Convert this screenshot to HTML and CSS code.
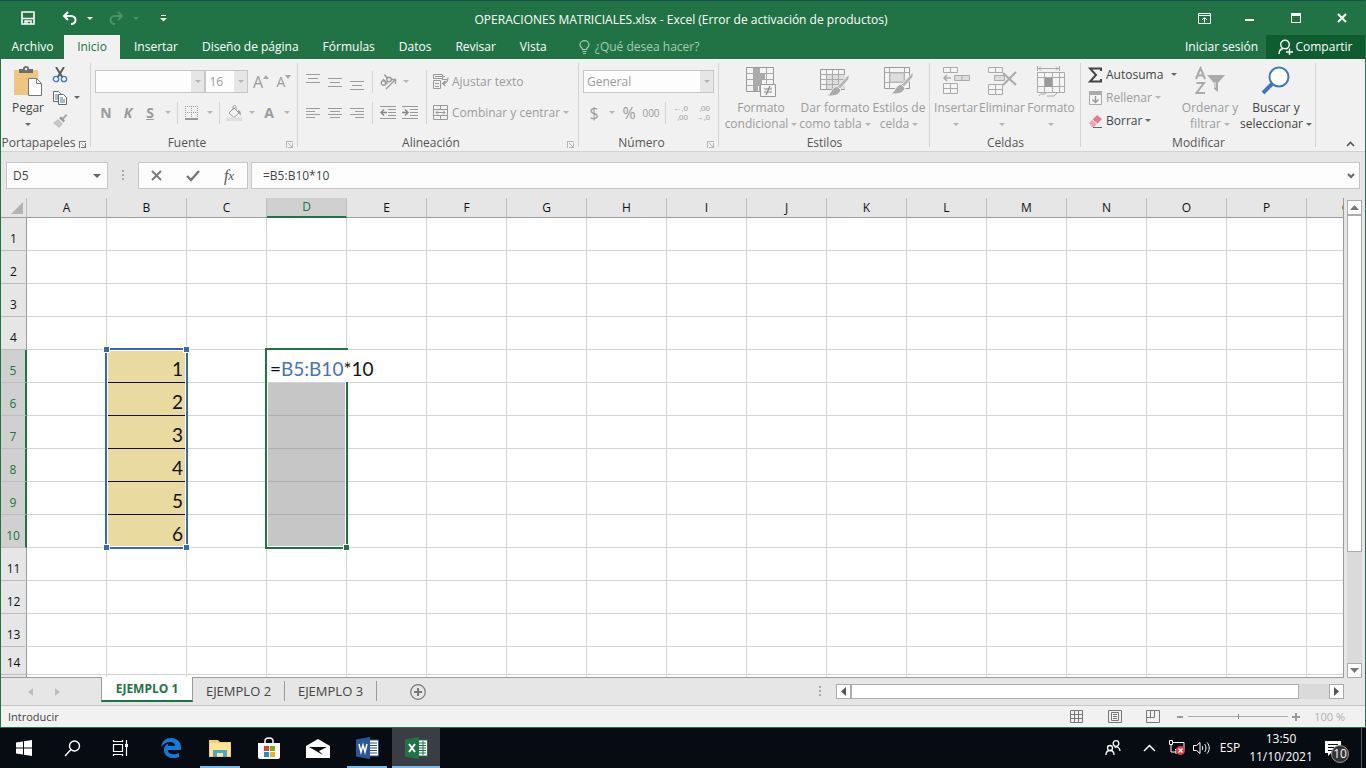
FILE: index.html
```html
<!DOCTYPE html>
<html lang="es">
<head>
    <meta charset="UTF-8">
    <meta name="viewport" content="width=device-width, initial-scale=1.0">
    <title>OPERACIONES MATRICIALES.xlsx - Excel</title>
    <link rel="stylesheet" href="styles.css">
</head>
<body>

<div class="window">
    <header class="titlebar">
        <div class="quick">
            <button class="q-save" aria-label="Guardar"><svg width="14" height="14" viewBox="0 0 14 14"><path d="M1 1h12v12H1z M1 7.5h12" fill="none" stroke="#fff" stroke-width="1.6"/><path d="M4 13v-3h6v3M6 10v3" fill="none" stroke="#fff" stroke-width="1.4"/></svg></button>
            <button class="q-undo" aria-label="Deshacer"><svg width="16" height="14" viewBox="0 0 16 14"><path d="M6 1L2 5l4 4M2 5h7c6 0 6 8 0 8" fill="none" stroke="#fff" stroke-width="2"/></svg></button>
            <button class="q-caret" aria-label="Historial"><i class="caret white"></i></button>
            <button class="q-redo" aria-label="Rehacer"><svg width="16" height="14" viewBox="0 0 16 14"><path d="M10 1l4 4-4 4M14 5H7c-6 0-6 8 0 8" fill="none" stroke="#4e9169" stroke-width="2"/></svg></button>
            <button class="q-caret" aria-label="Repetir"><i class="caret faded"></i></button>
            <button class="q-custom" aria-label="Personalizar"><svg width="7" height="7" viewBox="0 0 7 7"><path d="M1 .5h5" stroke="#fff"/><path d="M0 3h7L3.500 6.500z" fill="#fff"/></svg></button>
        </div>
        <h1>OPERACIONES MATRICIALES.xlsx - Excel (Error de activación de productos)</h1>
        <div class="controls">
            <button aria-label="Opciones de la cinta"><svg width="13" height="11" viewBox="0 0 13 11"><path d="M.5.5h12v10H.5zM.5 2.500h12M6.500 9.500V5M4 7l2.500-2.500L9 7" fill="none" stroke="#fff"/></svg></button>
            <button aria-label="Minimizar"><svg width="10" height="10" viewBox="0 0 10 10"><path d="M0 7h9" stroke="#fff" stroke-width="2"/></svg></button>
            <button aria-label="Maximizar"><svg width="10" height="10" viewBox="0 0 10 10"><path d="M.5.5h9v9h-9z" fill="none" stroke="#fff"/><path d="M0 1.500h10" stroke="#fff" stroke-width="3"/></svg></button>
            <button aria-label="Cerrar"><svg width="10" height="10" viewBox="0 0 10 10"><path d="M1 1l8 8M9 1L1 9" stroke="#fff" stroke-width="2"/></svg></button>
        </div>
    </header>

    <nav class="tabs">
        <button class="file">Archivo</button>
        <button class="active">Inicio</button>
        <button>Insertar</button>
        <button>Diseño de página</button>
        <button>Fórmulas</button>
        <button>Datos</button>
        <button>Revisar</button>
        <button>Vista</button>
        <button class="tell"><svg width="11" height="14" viewBox="0 0 11 14"><path d="M3.500 9.500C3.500 7.500 1 7.500 1 4.800a4.500 4.200 0 0 1 9 0c0 2.700-2.500 2.700-2.500 4.700zM3.500 11.500h4M4 13.500h3" fill="none" stroke="#a5cdb4" stroke-width="1.200"/></svg>¿Qué desea hacer?</button>
        <button class="signin">Iniciar sesión</button>
        <button class="share"><svg width="15" height="16" viewBox="0 0 15 16"><circle cx="7" cy="5.500" r="4.300" fill="none" stroke="#fff" stroke-width="1.400"/><path d="M1 15c0-3 2-5 4-5.500M8.500 9.500l1 .5M8 13h7M11.500 9.500v6.500" fill="none" stroke="#fff" stroke-width="1.400"/></svg>Compartir</button>
    </nav>

    <section class="ribbon">
        <div class="group g-clip">
            <div class="body">
                <button class="big paste">
                    <svg width="30" height="32" viewBox="0 0 30 32"><path d="M1 4h24v25H1z" fill="#edc67f"/><path d="M6 7V3h4a3 3 0 0 1 6 0h4v4z" fill="#6d6d6d"/><circle cx="13" cy="3" r="1.200" fill="#f1f1f1"/><path d="M15.500 12.500h8l5 5v12h-13z" fill="#fff" stroke="#777"/><path d="M23.500 12.500v5h5" fill="none" stroke="#777"/></svg>
                    <span>Pegar</span><i class="caret"></i>
                </button>
                <div class="stack">
                    <button aria-label="Cortar"><svg width="16" height="16" viewBox="0 0 16 16"><path d="M4 0l6.500 10.500M12 0L5.500 10.500" stroke="#5b5b5b" stroke-width="2"/><circle cx="4" cy="12" r="2.700" fill="none" stroke="#3f78b5" stroke-width="1.300"/><circle cx="12" cy="12" r="2.700" fill="none" stroke="#3f78b5" stroke-width="1.300"/></svg></button>
                    <button aria-label="Copiar"><svg width="16" height="16" viewBox="0 0 16 16"><path d="M1.500 1.500h5l2 2v8h-7z" fill="#fff" stroke="#666"/><path d="M6.500 4.500h5l3 3v7h-8z" fill="#fff" stroke="#666"/><path d="M3 5h3M3 7h3M3 9h3M8 8h3M8 10h5M8 12h5" stroke="#3f78b5"/></svg><i class="caret"></i></button>
                    <button aria-label="Copiar formato"><svg width="16" height="16" viewBox="0 0 16 16"><path d="M10 5l4-4 1.500 1.500-4 4z" fill="#aaa"/><path d="M7 5l2-1.500 4 4-1.500 2z" fill="#999"/><path d="M6 6l5 5-4 4-6-5z" fill="#c6c6c6"/></svg></button>
                </div>
            </div>
            <div class="caption">Portapapeles<i class="launch dark"></i></div>
        </div>

        <div class="group g-font">
            <div class="rows">
                <div class="row">
                    <span class="combo w-font"><select aria-label="Fuente" disabled><option></option></select></span>
                    <span class="combo w-size"><select aria-label="Tamaño" disabled><option>16</option></select></span>
                    <button class="glyph grow" disabled>A<svg width="6" height="4"><path d="M0 4l3-4 3 4z" fill="#a6a6a6"/></svg></button>
                    <button class="glyph shrink" disabled>A<svg width="6" height="4"><path d="M0 0h6L3 4z" fill="#a6a6a6"/></svg></button>
                </div>
                <div class="row">
                    <button class="glyph w22" disabled><b>N</b></button>
                    <button class="glyph w22" disabled><b><em>K</em></b></button>
                    <button class="glyph w22" disabled><b><u>S</u></b></button>
                    <button class="drop" disabled aria-label="Subrayado"><i class="caret dim"></i></button>
                    <span class="sep"></span>
                    <button class="w22" disabled aria-label="Bordes"><svg width="14" height="14" viewBox="0 0 14 14"><path d="M.5 0v13M6.500 0v13M12.500 0v13M0 .5h13M0 6.500h13" stroke="#999" stroke-dasharray="1 1"/><path d="M0 13h13" stroke="#999" stroke-width="2"/></svg></button>
                    <button class="drop" disabled aria-label="Más bordes"><i class="caret dim"></i></button>
                    <span class="sep"></span>
                    <button class="w22" disabled aria-label="Relleno"><svg width="16" height="16" viewBox="0 0 16 16"><path d="M3 8l5-5 5 5-5 4.500z" fill="#f4f4f4" stroke="#999"/><path d="M7 5V2c0-2 3-2 3 0v3" fill="none" stroke="#999"/><path d="M12 5c3 1 3 3 2.500 6-1-2-1-3-2.500-3z" fill="#999"/><path d="M0 12.500h16v3.500H0z" fill="#e0dede"/></svg></button>
                    <button class="drop" disabled aria-label="Color de relleno"><i class="caret dim"></i></button>
                    <button class="glyph w22" disabled><b>A</b></button>
                    <button class="drop" disabled aria-label="Color de fuente"><i class="caret dim"></i></button>
                </div>
            </div>
            <div class="caption">Fuente<i class="launch"></i></div>
        </div>

        <div class="group g-align">
            <div class="halves">
                <div class="rows">
                    <div class="row">
                        <button class="w22" disabled aria-label="Alinear arriba"><svg width="14" height="16"><path d="M0 .5h14M2 4.500h10M0 8.500h14" stroke="#9c9c9c"/></svg></button>
                        <button class="w22" disabled aria-label="Alinear en el medio"><svg width="14" height="16"><path d="M0 4.500h14M2 8.500h10M0 12.500h14" stroke="#9c9c9c"/></svg></button>
                        <button class="w22" disabled aria-label="Alinear abajo"><svg width="14" height="16"><path d="M0 7.500h14M2 11.500h10M0 15.500h14" stroke="#9c9c9c"/></svg></button>
                        <span class="sep"></span>
                        <button class="w22" disabled aria-label="Orientación"><svg width="17" height="16" viewBox="0 0 17 16"><g fill="none" stroke="#999" stroke-width="1.400"><circle cx="3.500" cy="9" r="2.200"/><path d="M3 5l4.500 5"/><circle cx="9" cy="5.500" r="2.200"/><path d="M4.500.500l3 4"/></g><path d="M6 15l9-9M11 5.500h4.500V10" fill="none" stroke="#999" stroke-width="1.300"/></svg></button>
                        <button class="drop" disabled aria-label="Más orientación"><i class="caret dim"></i></button>
                    </div>
                    <div class="row">
                        <button class="w22" disabled aria-label="Izquierda"><svg width="14" height="12"><path d="M0 1.500h14M0 4.500h9M0 7.500h14M0 10.500h9" stroke="#9c9c9c"/></svg></button>
                        <button class="w22" disabled aria-label="Centrar"><svg width="14" height="12"><path d="M0 1.500h14M2 4.500h10M0 7.500h14M2 10.500h10" stroke="#9c9c9c"/></svg></button>
                        <button class="w22" disabled aria-label="Derecha"><svg width="14" height="12"><path d="M0 1.500h14M5 4.500h9M0 7.500h14M5 10.500h9" stroke="#9c9c9c"/></svg></button>
                        <span class="sep"></span>
                        <button class="w22" disabled aria-label="Disminuir sangría"><svg width="16" height="14"><path d="M0 .5h16M8 3.500h8M8 6.500h8M8 9.500h8M0 12.500h16" stroke="#999"/><path d="M1 6.500h6M4 3.500l-3 3 3 3" fill="none" stroke="#888" stroke-width="1.500"/></svg></button>
                        <button class="w22" disabled aria-label="Aumentar sangría"><svg width="16" height="14"><path d="M0 .5h16M8 3.500h8M8 6.500h8M8 9.500h8M0 12.500h16" stroke="#999"/><path d="M0 6.500h6M3 3.500l3 3-3 3" fill="none" stroke="#888" stroke-width="1.500"/></svg></button>
                    </div>
                </div>
                <div class="rows wide">
                    <div class="row">
                        <button class="text" disabled><svg width="16" height="15"><path d="M.5.5h9v4h-9zM.5 6.500h7v8h-7zM2 2.500h10M2 9.500h4M2 12.500h4M9 5.500h5" fill="none" stroke="#999"/><path d="M15 3.500c0 4-1 6-5 6M12.500 7l-3 2.500 3 2.500" fill="none" stroke="#999" stroke-width="1.200"/></svg>Ajustar texto</button>
                    </div>
                    <div class="row">
                        <button class="text" disabled><svg width="16" height="15"><path d="M.5.5h14v14H.5zM.5 4.500h14M.5 10.500h14M7.500.5v4M7.500 10.500v4" fill="none" stroke="#999"/><path d="M3 7.500h9M5 5.500l-2 2 2 2M10 5.500l2 2-2 2" fill="none" stroke="#999"/></svg>Combinar y centrar</button>
                        <button class="drop" disabled aria-label="Más opciones"><i class="caret dim"></i></button>
                    </div>
                </div>
            </div>
            <div class="caption">Alineación<i class="launch"></i></div>
        </div>

        <div class="group g-number">
            <div class="rows">
                <div class="row">
                    <span class="combo w-num"><select aria-label="Formato de número" disabled><option>General</option></select></span>
                </div>
                <div class="row">
                    <button class="w22 money" disabled>$</button>
                    <button class="drop" disabled aria-label="Moneda"><i class="caret dim"></i></button>
                    <button class="w22 money" disabled>%</button>
                    <button class="w22 tiny" disabled>000</button>
                    <span class="sep"></span>
                    <button class="w22 dec" disabled><span>←,0</span><span>,00</span></button>
                    <button class="w22 dec" disabled><span>,00</span><span>→,0</span></button>
                </div>
            </div>
            <div class="caption">Número<i class="launch"></i></div>
        </div>

        <div class="group g-styles">
            <div class="body">
                <button class="big" disabled>
                    <svg width="30" height="32" viewBox="0 0 30 32"><path d="M.5 1.500h27v24H.5z" fill="#f4f4f4" stroke="#999"/><path d="M.5 7.500h27M.5 13.500h27M.5 19.500h27M7.500 1.500v24M13.500 1.500v24M20.500 1.500v24" stroke="#aaa" fill="none"/><path d="M8 2h5v6H8zM8 8h11v5H8zM8 14h8v5H8zM8 20h4v5H8z" fill="#aaa"/><path d="M14.500 18.500h15v12h-15z" fill="#f4f4f4" stroke="#999"/><path d="M18 23h8M18 26h8M24 20l-4 9" stroke="#888" stroke-width="1.200"/></svg>
                    <span>Formato<br>condicional<i class="caret dim"></i></span>
                </button>
                <button class="big" disabled>
                    <svg width="30" height="32" viewBox="0 0 30 32"><path d="M.5 3.500h24v20H.5z" fill="#f4f4f4" stroke="#999"/><path d="M7 9h18v14H7z" fill="#ddd"/><path d="M.5 8.500h24M.5 13.500h24M.5 18.500h24M6.500 3.500v20M12.500 3.500v20M18.500 3.500v20" stroke="#aaa"/><path d="M29 8v5L20 23l-3-2z" fill="#b4b4b4" stroke="#f1f1f1"/><path d="M17 20l4 4c-2 6-7 6-14 6 4-2 4-8 10-10z" fill="#aaa" stroke="#f1f1f1"/></svg>
                    <span>Dar formato<br>como tabla<i class="caret dim"></i></span>
                </button>
                <button class="big" disabled>
                    <svg width="30" height="32" viewBox="0 0 30 32"><path d="M.5 1.500h25v21H.5z" fill="#f4f4f4" stroke="#999"/><path d="M.5 6.500h25M.5 16.500h25M5.500 1.500v21M20.500 1.500v21" stroke="#aaa"/><path d="M6 7h14v9H6z" fill="#ddd" stroke="#bbb"/><path d="M29 6v5L20 21l-3-2z" fill="#b4b4b4" stroke="#f1f1f1"/><path d="M17 18l4 4c-2 6-7 6-14 6 4-2 4-8 10-10z" fill="#aaa" stroke="#f1f1f1"/></svg>
                    <span>Estilos de<br>celda<i class="caret dim"></i></span>
                </button>
            </div>
            <div class="caption">Estilos</div>
        </div>

        <div class="group g-cells">
            <div class="body">
                <button class="big" disabled>
                    <svg width="28" height="32" viewBox="0 0 28 32"><path d="M1.500 1.500h14v5h-14zM8.500 1.500v5M1.500 17.500h14v10h-14zM8.500 17.500v10M1.500 22.500h14" fill="#f4f4f4" stroke="#aaa"/><path d="M12.500 9.500h15v5h-15zM20 9.500v5" fill="#ddd" stroke="#aaa"/><path d="M2 12h7M5 9l-3 3 3 3" fill="none" stroke="#aaa" stroke-width="1.500"/></svg>
                    <span>Insertar</span><i class="caret dim"></i>
                </button>
                <button class="big" disabled>
                    <svg width="30" height="32" viewBox="0 0 30 32"><path d="M1.500 1.500h14v5h-14zM8.500 1.500v5M1.500 18.500h14v10h-14zM8.500 18.500v10M1.500 23.500h14" fill="#f4f4f4" stroke="#aaa"/><path d="M7.500 9.500h10v5h-10z" fill="#ddd" stroke="#aaa"/><path d="M16 7l13 12M29 6L16 19" stroke="#aaa" stroke-width="2"/></svg>
                    <span>Eliminar</span><i class="caret dim"></i>
                </button>
                <button class="big" disabled>
                    <svg width="28" height="32" viewBox="0 0 28 32"><path d="M.5 0v5M22.500 0v5M1 2.500h21M4 .5l-2 2 2 2M19 .5l2 2-2 2" fill="none" stroke="#aaa"/><path d="M.5 6.500h27v20H.5z" fill="#f4f4f4" stroke="#aaa"/><path d="M.5 11.500h27M.5 20.500h27M7.500 6.500v20M15.500 6.500v20M22.500 6.500v20M2 30c2-4 4 0 7-3M10 30h7l3-3" stroke="#aaa" fill="none"/><path d="M8 12h7v9H8z" fill="#999"/></svg>
                    <span>Formato</span><i class="caret dim"></i>
                </button>
            </div>
            <div class="caption">Celdas</div>
        </div>

        <div class="group g-edit">
            <div class="body">
                <div class="stack">
                    <button class="text"><svg width="15" height="16"><path d="M13 4V1.500H2L8 8l-6 6.500h11V12" fill="none" stroke="#444" stroke-width="2"/></svg>Autosuma<i class="caret"></i></button>
                    <button class="text near" disabled><svg width="15" height="16"><path d="M1.500 1.500h12v13h-12z" fill="#f4f4f4" stroke="#aaa"/><path d="M1 3h13" stroke="#aaa" stroke-width="4"/><path d="M7.500 6v6M4.500 9.500l3 3 3-3" fill="none" stroke="#999" stroke-width="1.400"/></svg>Rellenar<i class="caret dim"></i></button>
                    <button class="text near"><svg width="15" height="16"><path d="M1 10l3-3 5 4-3 3H4z" fill="#f0a3b2"/><path d="M4.500 6.500L9 2l5 4-4.500 4.500z" fill="#db7f93"/><path d="M5 14.500h9" stroke="#666"/></svg>Borrar<i class="caret"></i></button>
                </div>
                <button class="big" disabled>
                    <svg width="30" height="32" viewBox="0 0 30 32"><path d="M1 13L5.500 2 10 13M3 9.500h5M1.500 17H9L1.500 27H10" fill="none" stroke="#aaa" stroke-width="2"/><path d="M12 9h18l-7 8v9l-4-3v-6z" fill="#aaa"/><path d="M20 16v6" stroke="#f1f1f1"/></svg>
                    <span>Ordenar y<br>filtrar<i class="caret dim"></i></span>
                </button>
                <button class="big">
                    <svg width="30" height="32" viewBox="0 0 30 32"><circle cx="18" cy="11" r="9.500" fill="#fff" stroke="#3f78b5" stroke-width="2"/><path d="M11 18L2 27" stroke="#3f78b5" stroke-width="4"/></svg>
                    <span>Buscar y<br>seleccionar<i class="caret"></i></span>
                </button>
            </div>
            <div class="caption">Modificar</div>
        </div>
        <button class="collapse" aria-label="Contraer la cinta"><svg width="9" height="6"><path d="M1 5l3.500-3.500L8 5" fill="none" stroke="#555" stroke-width="1.600"/></svg></button>
    </section>

    <section class="formula">
        <div class="namebox"><input type="text" value="D5" aria-label="Cuadro de nombres"><i class="caret"></i></div>
        <span class="grip"></span>
        <div class="checks">
            <button aria-label="Cancelar"><svg width="12" height="12"><path d="M1 1l9 9M10 1l-9 9" stroke="#777" stroke-width="1.800"/></svg></button>
            <button aria-label="Introducir"><svg width="14" height="12"><path d="M1 6l4 4 8-9" fill="none" stroke="#777" stroke-width="2.400"/></svg></button>
            <button aria-label="Insertar función" class="fx">f<sub>x</sub></button>
        </div>
        <div class="entry"><input type="text" value="=B5:B10*10" aria-label="Barra de fórmulas"><svg width="8" height="6"><path d="M1 1l3 3 3-3" fill="none" stroke="#666" stroke-width="2"/></svg></div>
    </section>

    <main class="sheet">
        <div class="grid">
            <table>
                <thead>
                    <tr><th class="corner"><svg width="12" height="12"><path d="M12 0v12H0z" fill="#b3b3b3"/></svg></th><th>A</th><th>B</th><th>C</th><th class="on">D</th><th>E</th><th>F</th><th>G</th><th>H</th><th>I</th><th>J</th><th>K</th><th>L</th><th>M</th><th>N</th><th>O</th><th>P</th><th>Q</th></tr>
                </thead>
                <tbody id="rows"></tbody>
            </table>
        </div>
        <div class="vscroll">
            <button aria-label="Subir"><svg width="9" height="5"><path d="M0 5l4.500-5L9 5z" fill="#777"/></svg></button>
            <div class="thumb"></div>
            <div class="track"></div>
            <button aria-label="Bajar"><svg width="9" height="5"><path d="M0 0h9L4.500 5z" fill="#777"/></svg></button>
        </div>
    </main>

    <section class="sheetbar">
        <div class="arrows">
            <button aria-label="Hoja anterior"><svg width="5" height="8"><path d="M5 0v8L0 4z" fill="#bdbdbd"/></svg></button>
            <button aria-label="Hoja siguiente"><svg width="5" height="8"><path d="M0 0v8l5-4z" fill="#bdbdbd"/></svg></button>
        </div>
        <button class="stab active">EJEMPLO 1</button>
        <button class="stab">EJEMPLO 2</button>
        <button class="stab">EJEMPLO 3</button>
        <button class="add" aria-label="Hoja nueva"><svg width="16" height="16"><circle cx="8" cy="8" r="7.300" fill="none" stroke="#777" stroke-width="1.200"/><path d="M4 8h8M8 4v8" stroke="#777" stroke-width="2"/></svg></button>
        <span class="grip"></span>
        <div class="hscroll">
            <button aria-label="Izquierda"><svg width="5" height="9"><path d="M5 0v9L0 4.500z" fill="#555"/></svg></button>
            <div class="thumb"></div>
            <div class="track"></div>
            <button aria-label="Derecha"><svg width="5" height="9"><path d="M0 0v9l5-4.500z" fill="#555"/></svg></button>
        </div>
    </section>

    <footer class="status">
        <span class="mode">Introducir</span>
        <button aria-label="Normal"><svg width="14" height="14"><path d="M.5.5h12v12H.5zM.5 4.500h12M.5 8.500h12M4.500.5v12M8.500.5v12" fill="none" stroke="#777"/></svg></button>
        <button aria-label="Diseño de página"><svg width="14" height="14"><path d="M.5.5h13v12H.5zM3.500 2.500h7v8h-7zM5 4.500h4M5 6.500h4M5 8.500h4" fill="none" stroke="#777"/></svg></button>
        <button aria-label="Salto de página"><svg width="14" height="14"><path d="M.5.5h13v12H.5zM4.500.5v7M8.500.5v7M.5 7.500h8" fill="none" stroke="#777"/></svg></button>
        <button class="zoom-step" aria-label="Alejar"><svg width="8" height="8"><path d="M1 4h6" stroke="#999" stroke-width="2"/></svg></button>
        <input type="range" min="0" max="200" value="100" aria-label="Zoom">
        <button class="zoom-step" aria-label="Acercar"><svg width="8" height="8"><path d="M0 4h8M4 0v8" stroke="#999" stroke-width="2"/></svg></button>
        <span class="percent">100 %</span>
    </footer>
</div>

<div class="taskbar">
    <button aria-label="Inicio"><svg width="16" height="16"><path d="M0 2.500l7-1v6H0zM8 1.300L16 0v7.500H8zM0 8.500h7v6l-7-1zM8 8.500h8V16l-8-1.300z" fill="#fff"/></svg></button>
    <button aria-label="Buscar"><svg width="17" height="17"><circle cx="10.500" cy="6" r="5" fill="none" stroke="#fff" stroke-width="1.400"/><path d="M7 9.500L1 16" stroke="#fff" stroke-width="1.400"/></svg></button>
    <button aria-label="Vista de tareas"><svg width="17" height="16"><path d="M1.500 4.500h9v7h-9zM1.500 0v1.500h9V0M1.500 16v-1.500h9V16M14.500 0v16" fill="none" stroke="#fff" stroke-width="1.200"/><path d="M13 4h3v3h-3z" fill="#fff"/></svg></button>
    <button class="app first" aria-label="Edge"><svg width="20" height="20" viewBox="0 0 20 20"><path d="M0 9C1 3 5 0 10 0c6 0 10 4 10 9v3H7c0 5 7 5 11 3v4C11 22 3 19 3 12c0-4 3-6 5-7-1 1-1 2-1 3h7c0-5-9-6-14 1z" fill="#0f7bd8"/></svg></button>
    <button class="app open" aria-label="Explorador"><svg width="22" height="19" viewBox="0 0 22 19"><path d="M0 1h9l2 2h11v15H0z" fill="#f5cf69"/><path d="M1 4h20v13H1z" fill="#fde597"/><path d="M4 18v-7h14v7h-4v-4H8v4z" fill="#48a9c8"/></svg></button>
    <button class="app" aria-label="Tienda"><svg width="24" height="23" viewBox="0 0 24 23"><path d="M1 6h22v14q0 2-2 2H3q-2 0-2-2z" fill="#fff"/><path d="M8 6V4c0-4 8-4 8 0v2" fill="none" stroke="#fff" stroke-width="1.500"/><path d="M7 9h5v5H7z" fill="#e0442a"/><path d="M13 9h5v5h-5z" fill="#7aad20"/><path d="M7 15h5v5H7z" fill="#1d95d6"/><path d="M13 15h5v5h-5z" fill="#f2b32a"/></svg></button>
    <button class="app" aria-label="Correo"><svg width="24" height="19" viewBox="0 0 24 19"><path d="M0 7L12 0l12 7v12H0z" fill="#fff"/><path d="M3 8h18l-8 4 4 4z" fill="#070b12"/></svg></button>
    <button class="app open" aria-label="Word"><svg width="23" height="22" viewBox="0 0 23 22"><path d="M12 3h10.500v16H12z" fill="#fff" stroke="#2b579a"/><path d="M14 6h7M14 8.500h7M14 11h7M14 13.500h7M14 16h7" stroke="#2b579a"/><path d="M0 2.500L14 0v22L0 19.500z" fill="#2b579a"/><path d="M3 7l2 8 2-7 2 7 2-8" fill="none" stroke="#fff" stroke-width="1.500"/></svg></button>
    <button class="app current" aria-label="Excel"><svg width="23" height="22" viewBox="0 0 23 22"><path d="M12 3h10.500v16H12z" fill="#fff" stroke="#217346"/><path d="M14 6h7M14 8.500h7M14 11h7M14 13.500h7M14 16h7M18 4v14" stroke="#217346"/><path d="M0 2.500L14 0v22L0 19.500z" fill="#217346"/><path d="M4 7l6 8M10 7l-6 8" stroke="#fff" stroke-width="2"/></svg></button>
    <div class="tray">
        <button class="people" aria-label="Contactos"><svg width="16" height="16"><g fill="none" stroke="#fff" stroke-width="1.300"><circle cx="11" cy="3.500" r="2.800"/><circle cx="5" cy="8" r="2.500"/><path d="M1 15c0-6 8-6 8 0M9.500 7.500C12 6 15 8 15 11"/></g></svg></button>
        <button class="up" aria-label="Iconos ocultos"><svg width="13" height="8"><path d="M1 7l5.500-5.500L12 7" fill="none" stroke="#fff" stroke-width="1.500"/></svg></button>
        <button class="net" aria-label="Red"><svg width="17" height="16"><path d="M4 2.500h11v7H6M.5.500h3v4h-3zM2 5v7h5M7 10v4" fill="none" stroke="#fff"/><circle cx="11.500" cy="10.500" r="4.500" fill="#d93c42"/><path d="M9.500 8.500l4 4M13.500 8.500l-4 4" stroke="#fff" stroke-width="1.300"/></svg></button>
        <button class="vol" aria-label="Volumen"><svg width="17" height="14"><path d="M.5 4.500h3L7 1.500v11L3.500 9.500h-3zM9 5c1 1 1 3 0 4M11.500 3c2 2 2 6 0 8M14 1.500c3 3 3 8 0 11" fill="none" stroke="#fff"/></svg></button>
        <button class="lang">ESP</button>
        <button class="clock">13:50<br>11/10/2021</button>
        <button class="notes" aria-label="Notificaciones"><svg width="17" height="17"><path d="M0 1h16v12H6l-3 3v-3H0z" fill="#fff"/><path d="M3 4.500h10M3 7.500h10M3 10.500h6" stroke="#111"/></svg><span class="badge">10</span></button>
        <span class="peek"></span>
    </div>
</div>

<script>
    var columns = 17;
    var html = '';
    for (var r = 1; r <= 15; r++) {
        var picked = r >= 5 && r <= 10;
        html += '<tr' + (r == 14 ? ' class="short"' : '') + '><th' + (picked ? ' class="on"' : '') + '>' + (r < 15 ? r : '') + '</th>';
        for (var c = 1; c <= columns; c++) {
            if (c == 2 && picked) {
                html += '<td class="value">' + (r - 4);
                // contorno azul del rango al que apunta la formula
                if (r == 5) html += '<div class="range"><i></i><i></i><i></i><i></i></div>';
                html += '</td>';
            } else if (c == 4 && r == 5) {
                html += '<td class="editing"><div class="selection"></div><div class="typed">=<span>B5:B10</span>*10</div></td>';
            } else if (c == 4 && picked) {
                html += '<td class="chosen"></td>';
            } else {
                html += '<td></td>';
            }
        }
        html += '</tr>';
    }
    document.getElementById('rows').innerHTML = html;
</script>

</body>
</html>
```
FILE: styles.css
```css
* {
    box-sizing: border-box;
}
body {
    margin: 0;
    height: 100vh;
    display: flex;
    flex-direction: column;
    overflow: hidden;
    font-family: "Open Sans", "Noto Sans", sans-serif;
    font-size: 12px;
    line-height: 16px;
    color: #444;
}
button, input, select {
    font: inherit;
    color: inherit;
    margin: 0;
    padding: 0;
    border: none;
    background: none;
    border-radius: 0;
    white-space: nowrap;
}
button {
    display: flex;
    align-items: center;
    justify-content: center;
}
button:disabled, select:disabled {
    color: #9b9b9b;
    opacity: 1;
}
svg {
    display: block;
    flex: none;
}
.caret {
    display: inline-block;
    flex: none;
    width: 0;
    height: 0;
    border: 3px solid transparent;
    border-top-color: #666;
    border-bottom: none;
}
.caret.dim { border-top-color: #b5b5b5; }
.caret.white { border-top-color: #fff; }
.caret.faded { border-top-color: #4e9169; }

.window {
    flex: 1;
    min-height: 0;
    display: flex;
    flex-direction: column;
    border: 1px solid #217346;
    border-top-color: #17504f;
    background: #e6e6e6;
}

/* barra de titulo */
.titlebar {
    height: 34px;
    flex: none;
    display: grid;
    grid-template-columns: 1fr auto 1fr;
    align-items: center;
    background: #217346;
    color: #fff;
}
.titlebar h1 {
    margin: 0;
    padding: 4px 4px 0 0;
    font-size: 12px;
    font-weight: normal;
}
.quick {
    display: flex;
    align-items: center;
    padding-left: 16px;
}
.quick button { height: 24px; }
.q-save { width: 22px; }
.q-undo { width: 22px; margin-left: 20px; }
.q-redo { width: 22px; margin-left: 6px; }
.q-caret { width: 18px; }
.q-custom { width: 20px; margin-left: 8px; }
.controls {
    display: flex;
    justify-content: flex-end;
}
.controls button {
    width: 46px;
    height: 32px;
}

/* pestañas */
.tabs {
    height: 24px;
    flex: none;
    display: flex;
    background: #217346;
    color: #fff;
}
.tabs button { padding: 0 12px; }
.tabs .file { width: 63px; padding: 0 8px; }
.tabs .active {
    width: 56px;
    margin-right: 2px;
    padding: 0;
    background: #f1f1f1;
    color: #217346;
}
.tabs .tell { padding-left: 20px; gap: 5px; color: #a5cdb4; }
.tabs .signin { margin-left: auto; padding: 0 8px; }
.tabs .share {
    width: 99px;
    padding: 0;
    gap: 2px;
    background: #0e5c2f;
}

/* cinta */
.ribbon {
    height: 93px;
    flex: none;
    display: flex;
    padding-top: 4px;
    background: #f1f1f1;
    border-bottom: 1px solid #d2d2d2;
}
.group {
    flex: none;
    display: flex;
    flex-direction: column;
    background: linear-gradient(#d4d4d4, #d4d4d4) no-repeat right top / 1px 84px;
}
.g-clip { width: 90px; }
.g-font { width: 207px; }
.g-align { width: 281px; }
.g-number { width: 140px; }
.g-styles { width: 211px; }
.g-cells { width: 151px; }
.g-edit { width: 235px; }
.body, .halves, .rows {
    height: 72px;
    display: flex;
}
.rows {
    flex-direction: column;
    padding: 7px 4px 0;
    gap: 8px;
}
.row {
    height: 23px;
    display: flex;
    align-items: center;
}
.stack {
    display: flex;
    flex-direction: column;
}
.stack button {
    height: 23px;
    justify-content: flex-start;
    gap: 6px;
}
.big {
    flex-direction: column;
    justify-content: flex-start;
    align-self: flex-start;
    padding-top: 3px;
}
.big svg { margin-bottom: 2px; }
.big > .caret { margin-top: 7px; }
.big span .caret { margin: 0 0 2px 3px; }
.g-clip .big { width: 51px; padding-left: 3px; }
.g-styles .body { padding-left: 4px; }
.g-styles .big { width: 76px; }
.g-styles .big + .big { width: 72px; }
.g-styles .big:last-child { width: 56px; }
.g-cells .body { padding-left: 3px; }
.g-cells .big { width: 46px; }
.g-cells .big:last-child { width: 52px; }
.g-edit .body { padding-left: 7px; }
.g-edit .stack { width: 92px; }
.g-edit .big { width: 60px; }
.g-edit .big:last-child { width: 72px; }
.caption {
    position: relative;
    text-align: center;
    padding-right: 15px;
    color: #555;
}
.g-styles .caption, .g-cells .caption, .g-edit .caption { padding-right: 0; }
.launch {
    position: absolute;
    right: 5px;
    top: 6px;
    width: 7px;
    height: 7px;
    border-left: 1px solid #b5b5b5;
    border-top: 1px solid #b5b5b5;
}
.launch::after {
    content: "";
    position: absolute;
    right: 0;
    bottom: 0;
    width: 4px;
    height: 4px;
    border-right: 1px solid #b5b5b5;
    border-bottom: 1px solid #b5b5b5;
    background: linear-gradient(45deg, transparent 40%, #b5b5b5 40% 60%, transparent 60%);
}
.launch.dark, .launch.dark::after { border-color: #777; }
.combo {
    position: relative;
    height: 23px;
}
.combo select {
    appearance: none;
    width: 100%;
    height: 23px;
    padding: 0 3px;
    border: 1px solid #c6c6c6;
    background: linear-gradient(#e6e6e6, #e6e6e6) no-repeat right / 13px 100% #fdfdfd;
}
.combo::after {
    content: "";
    position: absolute;
    right: 4px;
    top: 10px;
    border: 3px solid transparent;
    border-top-color: #b5b5b5;
    border-bottom: none;
}
.w-font { width: 111px; }
.w-size { width: 43px; }
.w-num { width: 131px; }
.w22 { width: 22px; }
.drop { width: 13px; height: 22px; }
.sep {
    width: 1px;
    height: 22px;
    margin: 0 3px;
    background: #d4d4d4;
}
.g-align .sep { margin: 0 4px; }
.glyph { font-size: 14px; }
.glyph svg { margin-bottom: 10px; }
.grow { width: 26px; font-size: 16px; }
.shrink { width: 20px; }
.text { gap: 3px; }
.g-edit .text { gap: 3px; }
.g-edit .text .caret { margin-left: 5px; }
.g-edit .near .caret { margin-left: 0; }
.halves .rows:first-child { width: 128px; }
.halves .rows.wide { padding-left: 7px; }
.halves .text { width: 126px; justify-content: flex-start; }
.halves .wide {
    background: linear-gradient(#d4d4d4, #d4d4d4) no-repeat left 7px / 1px 54px;
}
.money { font-size: 16px; }
.tiny { font-size: 10px; }
.dec {
    flex-direction: column;
    align-items: flex-end;
    padding-right: 3px;
    font-family: "Liberation Sans", sans-serif;
    font-size: 8px;
    line-height: 9px;
}
.collapse {
    margin: auto 10px 4px auto;
}

/* barra de formulas */
.formula {
    height: 46px;
    flex: none;
    display: flex;
    padding: 10px 5px;
}
.formula > div {
    height: 27px;
    display: flex;
    align-items: center;
    background: #fdfdfd;
    border: 1px solid #c6c6c6;
}
.namebox { width: 102px; padding: 0 6px; }
.namebox input { flex: 1; min-width: 0; }
.namebox .caret { border-width: 4px 4px 0; }
.grip {
    width: 2px;
    height: 10px;
    margin: 8px 14px;
    background: repeating-linear-gradient(#aaa 0 2px, transparent 2px 4px);
}
.checks { width: 110px; margin-right: 3px; }
.checks button { flex: 1; height: 25px; }
.checks .fx {
    font: italic 16px "Liberation Serif", serif;
    color: #555;
}
.fx sub { font-size: 13px; }
.entry { flex: 1; padding: 0 4px 0 11px; }
.entry input { flex: 1; }

/* hoja */
.sheet {
    flex: 1;
    min-height: 0;
    display: flex;
}
.grid {
    flex: 1;
    min-width: 0;
    overflow: hidden;
    border-bottom: 1px solid #9b9b9b;
    border-right: 1px solid #9b9b9b;
}
table {
    table-layout: fixed;
    width: 1386px;
    border-collapse: separate;
    border-spacing: 0;
}
th {
    padding: 0;
    height: 20px;
    width: 80px;
    font-size: 12px;
    font-weight: normal;
    line-height: 18px;
    color: #111;
    background: #e6e6e6;
    border-right: 1px solid #bdbdbd;
    border-bottom: 1px solid #9b9b9b;
}
th.corner { width: 26px; }
.corner svg { margin-left: 10px; }
thead .on {
    background: #d0d0d0;
    color: #217346;
    border-bottom: 2px solid #217346;
}
tbody th {
    height: 33px;
    vertical-align: bottom;
    padding-bottom: 2px;
    border-right-color: #9b9b9b;
    border-bottom-color: #bdbdbd;
}
tbody .on {
    background: #d0d0d0;
    color: #217346;
    border-right: 2px solid #217346;
}
td {
    position: relative;
    height: 33px;
    padding: 0;
    background: #fff;
    border-right: 1px solid #d4d4d4;
    border-bottom: 1px solid #d4d4d4;
}
.short th, .short td { height: 28px; }
.value, .typed {
    font-family: Lato, "Open Sans", sans-serif;
    font-size: 19px;
    line-height: 26px;
    color: #111;
}
.value {
    padding: 4px 3px 0 0;
    text-align: right;
    vertical-align: bottom;
    background: #e9db9f;
    border-bottom-color: #111;
}
.chosen {
    background: #c6c6c6;
    border-bottom-color: #adadad;
}
.range, .selection {
    position: absolute;
    z-index: 1;
    top: -2px;
    left: -2px;
    width: 83px;
    height: 201px;
    border: 2px solid #3c69ad;
    box-shadow: inset 0 0 0 1px #fff;
}
.range i {
    position: absolute;
    width: 5px;
    height: 5px;
    background: #3c69ad;
    outline: 1px solid #fff;
}
.range i:nth-child(1) { left: -3px; top: -3px; }
.range i:nth-child(2) { right: -3px; top: -3px; }
.range i:nth-child(3) { left: -3px; bottom: -3px; }
.range i:nth-child(4) { right: -3px; bottom: -3px; }
.selection { border-color: #217346; }
.selection::after {
    content: "";
    position: absolute;
    right: -3px;
    bottom: -3px;
    width: 5px;
    height: 5px;
    background: #217346;
    outline: 1px solid #fff;
}
.typed {
    position: absolute;
    z-index: 2;
    left: 0;
    top: 0;
    height: 32px;
    padding: 6px 2px 0 3px;
    white-space: nowrap;
    background: #fff;
}
.typed span { color: #4a72b8; }
.vscroll {
    width: 15px;
    margin: 2px 3px 0;
    display: flex;
    flex-direction: column;
    background: #dadada;
}
.vscroll button, .hscroll button, .thumb {
    flex: none;
    width: 15px;
    height: 15px;
    background: #fff;
    border: 1px solid #ababab;
}
.vscroll .thumb { flex: 336; }
.vscroll .track { flex: 112; }

/* hojas del libro */
.sheetbar {
    height: 28px;
    flex: none;
    display: flex;
    padding-right: 21px;
    border-bottom: 1px solid #c6c6c6;
}
.arrows { display: flex; width: 100px; padding-left: 16px; }
.arrows button { width: 27px; }
.stab {
    width: 92px;
    height: 20px;
    margin-top: 3px;
    font-size: 13px;
    border-right: 1px solid #9b9b9b;
}
.stab.active {
    height: 25px;
    margin-top: -1px;
    font-size: 12px;
    font-weight: bold;
    color: #217346;
    background: #fff;
    border-left: 1px solid #9b9b9b;
    border-bottom: 2px solid #217346;
}
.add { margin-left: 33px; }
.sheetbar .grip { margin: 8px 15px 0 auto; }
.hscroll {
    width: 508px;
    height: 15px;
    margin-top: 6px;
    display: flex;
    background: #dadada;
}
.hscroll .thumb { flex: 448; }
.hscroll .track { flex: 30; }

/* barra de estado */
.status {
    height: 21px;
    flex: none;
    display: flex;
    align-items: center;
    padding: 0 20px 0 7px;
    background: #f1f1f1;
    font-size: 11px;
}
.mode { margin-right: auto; }
.status button { width: 38px; }
.status .zoom-step { width: 16px; }
.status input {
    appearance: none;
    width: 100px;
    height: 14px;
    background: linear-gradient(#aaa, #aaa) no-repeat center / 100% 1px;
}
.status input::-webkit-slider-thumb {
    appearance: none;
    width: 1px;
    height: 5px;
    background: #888;
}
.percent { margin-left: 10px; color: #b0b0b0; }

/* barra de tareas */
.taskbar {
    height: 40px;
    flex: none;
    display: flex;
    background: #070b12;
    color: #fff;
}
.taskbar > button { width: 48px; }
.taskbar .app { margin-right: 1px; }
.taskbar .first { margin-left: 3px; }
.taskbar .open {
    background: linear-gradient(#76b9ed, #76b9ed) no-repeat 4px bottom / 40px 2px;
}
.taskbar .current {
    background: linear-gradient(#76b9ed, #76b9ed) no-repeat left bottom / 100% 2px #3a3d43;
}
.tray {
    display: flex;
    margin-left: auto;
}
.people { width: 40px; }
.up { width: 32px; }
.net, .vol { width: 24px; }
.lang { width: 34px; }
.clock { width: 68px; line-height: 18px; }
.notes {
    position: relative;
    width: 46px;
    justify-content: flex-start;
    padding-left: 10px;
}
.badge {
    position: absolute;
    left: 16px;
    top: 17px;
    width: 18px;
    height: 18px;
    border-radius: 50%;
    border: 1px solid #999;
    background: #333;
    line-height: 16px;
}
.peek {
    width: 5px;
    border-left: 1px solid #555;
}
```
